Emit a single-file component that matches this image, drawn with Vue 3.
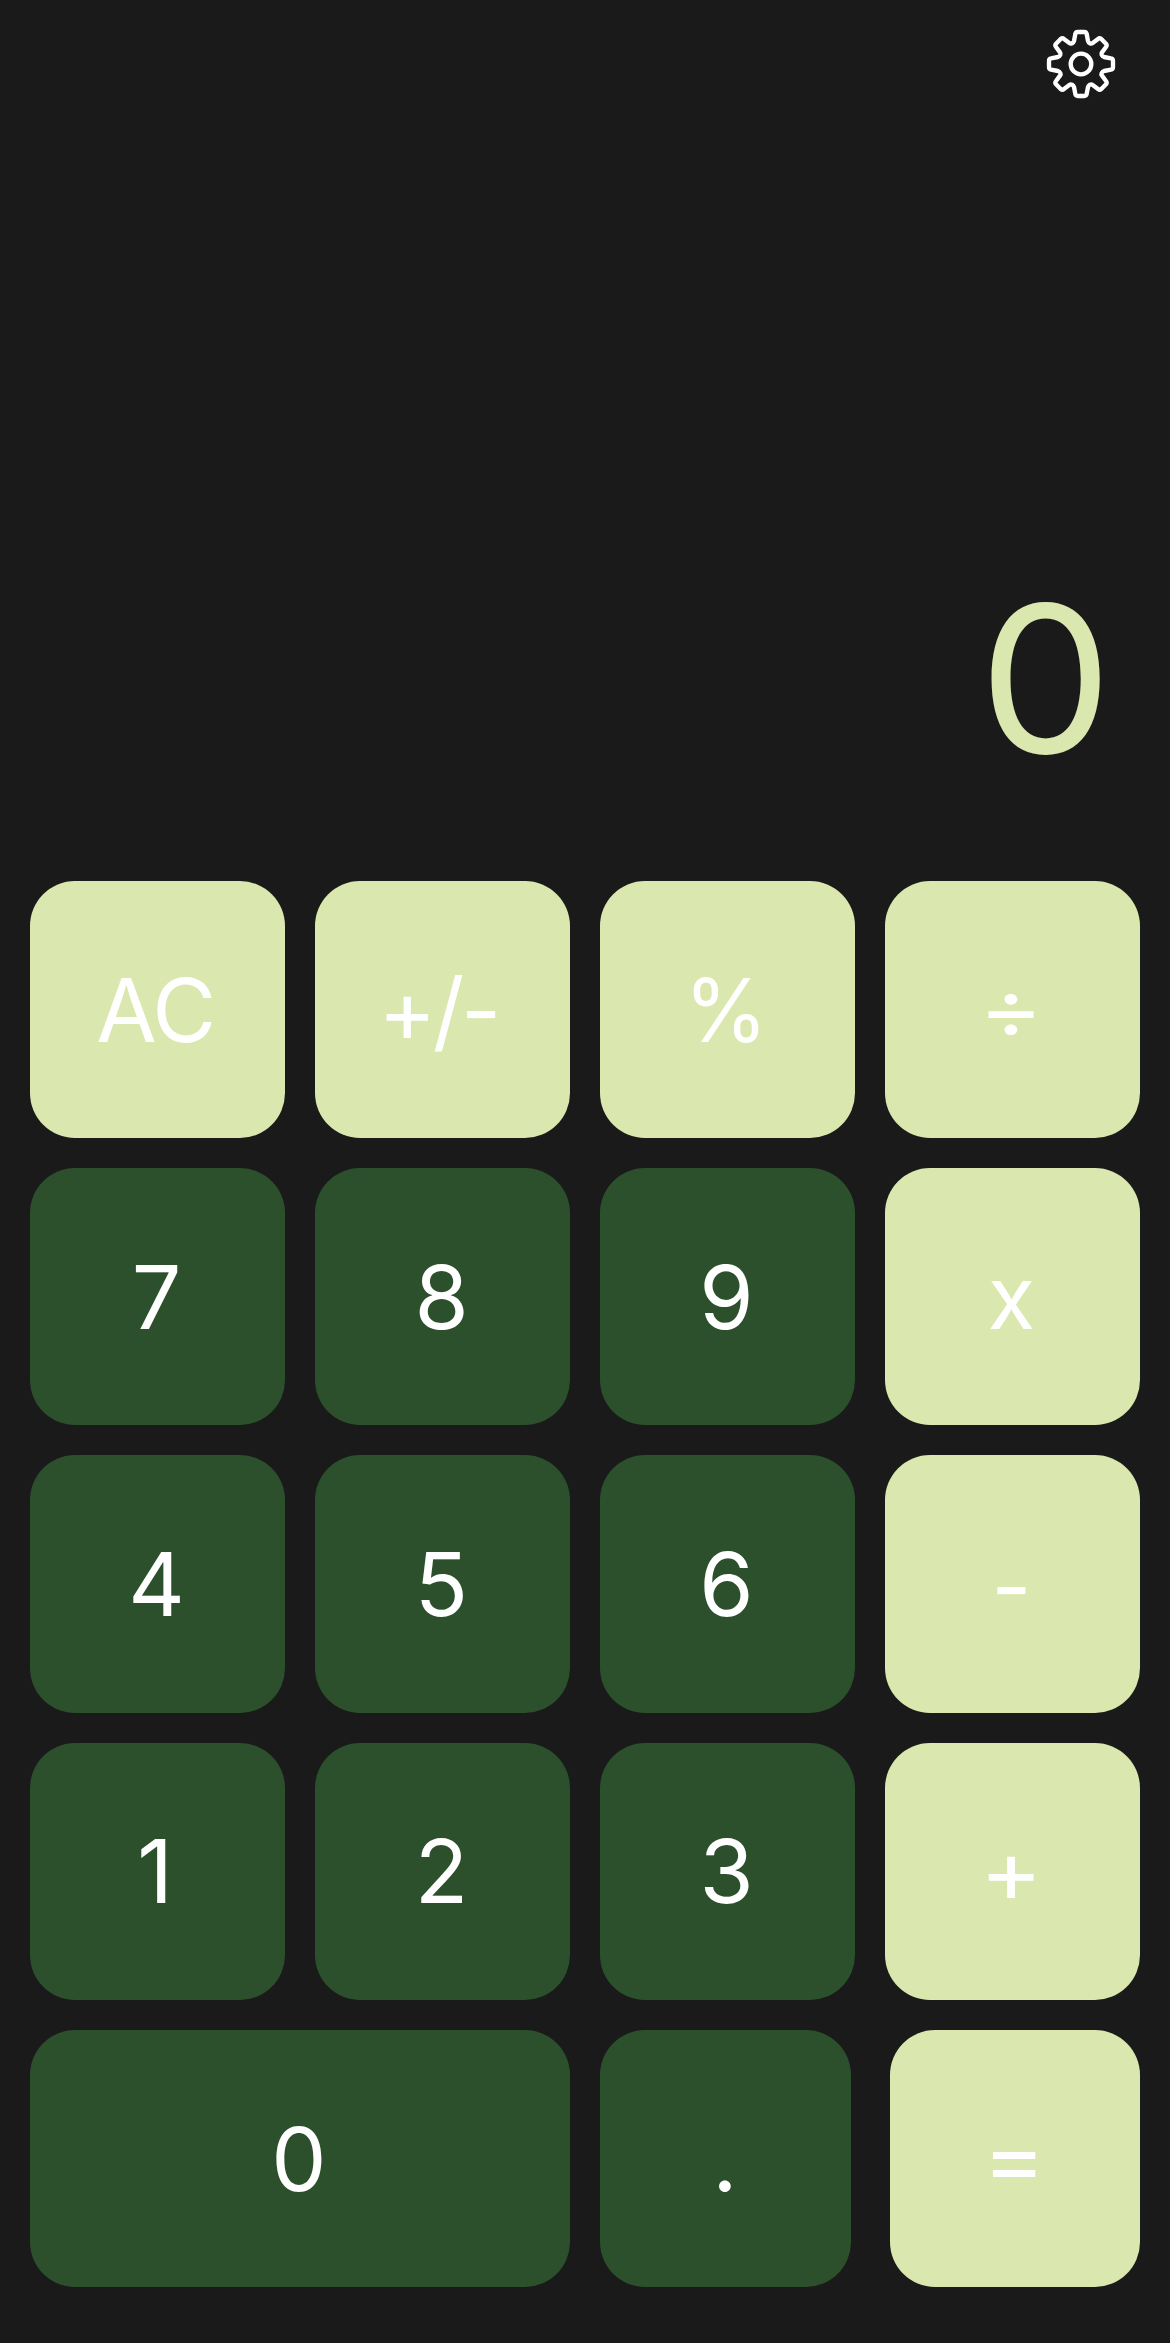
<script setup>
import { ref } from 'vue'

const display = ref('0')

const rows = [
  [
    { label: 'AC', tone: 'light', name: 'ac' },
    { label: '+/-', tone: 'light', name: 'sign' },
    { label: '%', tone: 'light', name: 'percent' },
    { label: '÷', tone: 'light', name: 'divide' },
  ],
  [
    { label: '7', tone: 'dark' },
    { label: '8', tone: 'dark' },
    { label: '9', tone: 'dark' },
    { label: 'x', tone: 'light', name: 'times' },
  ],
  [
    { label: '4', tone: 'dark' },
    { label: '5', tone: 'dark' },
    { label: '6', tone: 'dark' },
    { label: '-', tone: 'light', name: 'minus' },
  ],
  [
    { label: '1', tone: 'dark', name: 'one' },
    { label: '2', tone: 'dark' },
    { label: '3', tone: 'dark' },
    { label: '+', tone: 'light', name: 'plus' },
  ],
]

const gearQuarter =
  'M0-96H10Q16-96 17-90L21-69Q22-65 27-62Q31-60 35-63L51-75Q56-79 61-75L75-61Q79-56 75-51L63-35Q60-31 62-27Q65-22 69-21L90-17Q96-16 96-10V0'
</script>

<template>
  <main class="calculator">
    <header class="toolbar">
      <button class="settings" aria-label="Settings">
        <svg viewBox="-105 -105 210 210" width="70" height="70">
          <path
            v-for="turn in 4"
            :key="turn"
            :d="gearQuarter"
            :transform="`rotate(${turn * 90})`"
          />
          <circle r="31" />
        </svg>
      </button>
    </header>

    <output class="display"><span>{{ display }}</span></output>

    <section class="keypad">
      <div v-for="(row, i) in rows" :key="i" class="row">
        <button v-for="key in row" :key="key.label" class="key" :class="[key.tone, key.name]">
          <span>{{ key.label }}</span>
        </button>
      </div>
      <div class="row last">
        <button class="key dark"><span>0</span></button>
        <div class="pair">
          <button class="key dark point"><span>.</span></button>
          <button class="key light equals"><span>=</span></button>
        </div>
      </div>
    </section>
  </main>
</template>

<style>
body {
  margin: 0;
  background: #1a1a1a;
}
</style>

<style scoped>
.calculator {
  box-sizing: border-box;
  display: flex;
  flex-direction: column;
  width: 1170px;
  height: 2343px;
  padding: 0 30px 55.85px;
  background: #1a1a1a;
  font-family: Inter, 'Liberation Sans', sans-serif;
}

button {
  margin: 0;
  padding: 0;
  border: 0;
  font: inherit;
  background: none;
}

.toolbar {
  display: flex;
  justify-content: flex-end;
  padding: 29px 24px 0 0;
}

.settings,
.settings svg {
  display: block;
}

.settings svg {
  fill: none;
  stroke: #fff;
  stroke-width: 13;
  stroke-linecap: round;
  stroke-linejoin: round;
}

.display {
  display: flex;
  flex: 1;
  align-items: flex-end;
  justify-content: flex-end;
  padding: 0 30px 77.5px 0;
  color: #dae7ae;
  font-size: 205px;
  line-height: 250px;
}

.display span {
  transform: scaleX(1.03);
}

.keypad {
  display: flex;
  flex-direction: column;
  gap: 30px;
}

.row {
  display: grid;
  grid-template-columns: repeat(4, 1fr);
  gap: 30px;
  height: 257.25px;
}

.row.last {
  grid-template-columns: repeat(2, 1fr);
}

.pair {
  display: grid;
  grid-template-columns: 251px 250px;
  justify-content: space-between;
}

.key {
  display: flex;
  align-items: center;
  justify-content: center;
  padding-right: 2px;
  border-radius: 45px;
  color: #fff;
  font-size: 87.7px;
  line-height: 106px;
}

/* Optical adjustments of single labels */
.ac {
  padding-right: 4px;
}

.ac span {
  letter-spacing: -1.5px;
}

.sign {
  padding-right: 9px;
}

.sign span {
  letter-spacing: -3.5px;
}

.percent span {
  transform: scaleX(0.97);
}

.divide span {
  transform: translateY(-2px) scale(1.12, 0.94);
}

.minus span {
  transform: translateY(2px);
}

.plus span {
  transform: translateY(-1px) scaleX(1.08);
}

.equals span {
  transform: translateY(-1.5px) scale(1.09, 0.97);
}

.one {
  padding-right: 5px;
}

.point {
  padding-right: 1px;
}

.light {
  background: #dae7ae;
}

.dark {
  background: #2c502b;
}
</style>
